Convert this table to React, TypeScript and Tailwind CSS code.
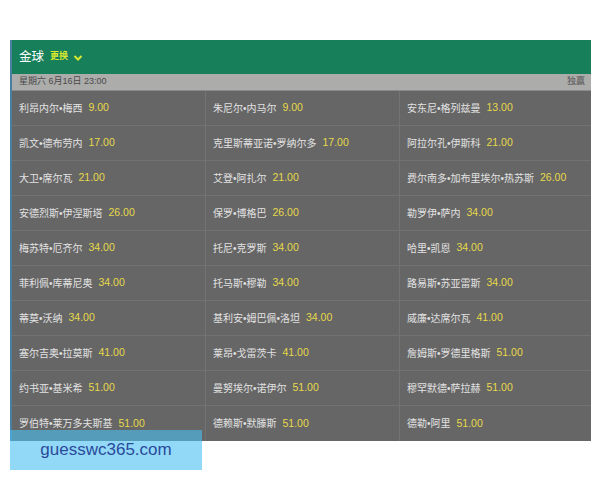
const rows: [string, string][][] = [
  [["利昂内尔•梅西", "9.00"], ["朱尼尔•内马尔", "9.00"], ["安东尼•格列兹曼", "13.00"]],
  [["凯文•德布劳内", "17.00"], ["克里斯蒂亚诺•罗纳尔多", "17.00"], ["阿拉尔孔•伊斯科", "21.00"]],
  [["大卫•席尔瓦", "21.00"], ["艾登•阿扎尔", "21.00"], ["费尔南多•加布里埃尔•热苏斯", "26.00"]],
  [["安德烈斯•伊涅斯塔", "26.00"], ["保罗•博格巴", "26.00"], ["勒罗伊•萨内", "34.00"]],
  [["梅苏特•厄齐尔", "34.00"], ["托尼•克罗斯", "34.00"], ["哈里•凯恩", "34.00"]],
  [["菲利佩•库蒂尼奥", "34.00"], ["托马斯•穆勒", "34.00"], ["路易斯•苏亚雷斯", "34.00"]],
  [["蒂莫•沃纳", "34.00"], ["基利安•姆巴佩•洛坦", "34.00"], ["威廉•达席尔瓦", "41.00"]],
  [["塞尔吉奥•拉莫斯", "41.00"], ["莱昂•戈雷茨卡", "41.00"], ["詹姆斯•罗德里格斯", "51.00"]],
  [["约书亚•基米希", "51.00"], ["曼努埃尔•诺伊尔", "51.00"], ["穆罕默德•萨拉赫", "51.00"]],
  [["罗伯特•莱万多夫斯基", "51.00"], ["德赖斯•默滕斯", "51.00"], ["德勒•阿里", "51.00"]],
];

export default function App() {
  return (
    <div
      className="relative w-[600px] h-[480px] bg-white overflow-hidden"
      style={{ fontFamily: '"Liberation Sans", "Noto Sans CJK SC", sans-serif' }}
    >
      <div className="ml-[10px] mt-[40px] w-[581px] border-l-2 border-[#4b7fa0]">
        {/* header */}
        <div className="h-[34px] bg-[#17805a] flex items-center pl-[7px] gap-[6px]">
          <span className="text-[12.5px] text-white">金球</span>
          <span className="text-[9px] font-bold text-[#d8e830]">更换</span>
          <svg width="10" height="8" viewBox="0 0 10 8" className="-ml-[1px] mt-[1px]">
            <path d="M1.5 2 L5 5.5 L8.5 2" fill="none" stroke="#d8e830" strokeWidth="2" />
          </svg>
        </div>
        {/* date bar */}
        <div className="h-[17px] bg-[#acacaa] flex items-center justify-between pl-[7px] pr-[6px] border-b border-[#8a8a8a]">
          <span className="text-[9px] text-[#4a4a4a]">星期六 6月16日 23:00</span>
          <span className="text-[9px] text-[#555]">独赢</span>
        </div>
        {/* grid */}
        <div className="bg-[#666666]">
          {rows.map((row, i) => (
            <div key={i} className="grid grid-cols-[194px_194px_1fr] h-[35px] border-b border-[#727272] last:border-b-0">
              {row.map(([name, odds], j) => (
                <div
                  key={j}
                  className={`flex items-center pl-[7px] gap-[6px] whitespace-nowrap ${j < 2 ? "border-r border-[#737373]" : ""}`}
                >
                  <span className="text-[10px] text-[#e2e2e2]">{name}</span>
                  <span className="text-[10.5px] text-[#e6d94a]">{odds}</span>
                </div>
              ))}
            </div>
          ))}
        </div>
      </div>
      {/* watermark */}
      <div className="absolute left-[10px] top-[430px] w-[192px] h-[40px] bg-[#48bff0]/60 flex items-center justify-center">
        <span className="text-[17px] text-[#2a4a9a]">guesswc365.com</span>
      </div>
    </div>
  );
}
